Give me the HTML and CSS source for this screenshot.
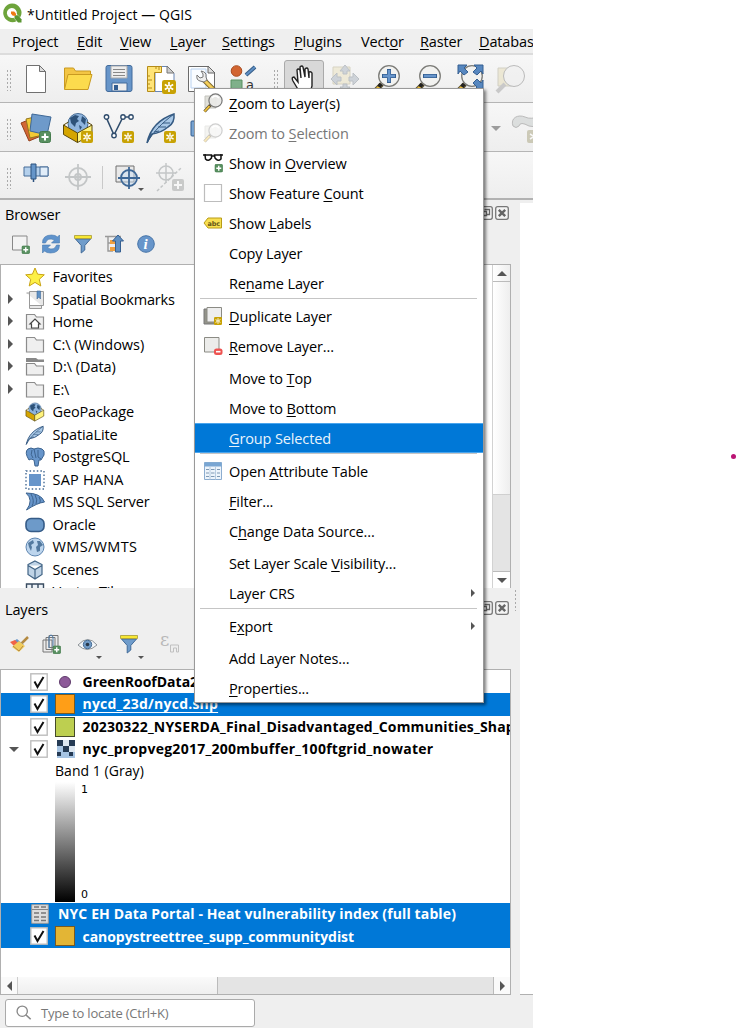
FILE: index.html
```html
<!DOCTYPE html>
<html lang="en">
<head>
<meta charset="utf-8">
<title>*Untitled Project — QGIS</title>
<link rel="stylesheet" href="styles.css">
</head>
<body>
<svg class="defs" width="0" height="0">
  <defs>
    <symbol id="mag" viewBox="0 0 20 20"><path d="M2 3h11v12H2z" fill="#e0e0da" stroke="#c2c2bc"/><path d="M1.500 18.500l6-6.500" stroke="#5c5030" stroke-width="3.200"/><path d="M1.500 18.500l5-5.400" stroke="#f2c33d" stroke-width="1.800"/><circle cx="12.500" cy="7.500" r="6.600" fill="#e9e9e7" fill-opacity=".92" stroke="#777" stroke-width="1.200"/><path d="M9 5q3-4 7 0" stroke="#fff" fill="none" stroke-width="1.500"/></symbol>
    <symbol id="plus" viewBox="0 0 12 12"><rect x=".5" y=".5" width="11" height="11" rx="2" fill="#589060" stroke="#467c4e"/><path d="M6 2.500v7M2.500 6h7" stroke="#fff" stroke-width="2"/></symbol>
    <symbol id="burst" viewBox="0 0 12 12"><rect width="12" height="12" rx="2" fill="#c8a204"/><path d="M6 1.800v8.400M2.400 3.900l7.200 4.200M2.400 8.100l7.200-4.200" stroke="#fff" stroke-width="1.400"/><circle cx="6" cy="6" r=".8" fill="#c8a204"/></symbol>
    <symbol id="folder" viewBox="0 0 20 20"><path d="M1.500 17V2.500h8l2 2.500h7v12z" fill="#efefef" stroke="#8c8c8c" stroke-width="1.200"/></symbol>
    <symbol id="globebox" viewBox="0 0 32 32"><circle cx="16" cy="11.500" r="10" fill="#8fb5de" stroke="#456b94"/><path d="M8 6l5-3 4 1-2 3 2 2-3 2-1 4-4-4zM20 4l4 3-1 6-4-4zM17 13l3 2-2 3z" fill="#2d5279"/><path d="M1.500 13l14 8v9.500L1.500 22.500z" fill="#d5a500" stroke="#5b4a0c"/><path d="M15.500 21l14.500-8v9.500l-14.500 8z" fill="#fff37c" stroke="#5b4a0c"/><path d="M1.500 13l5-3M30 13l-5-3" stroke="#5b4a0c"/></symbol>
    <symbol id="feather" viewBox="0 0 32 32"><path d="M2 31C5 17 14 7 29 2q1 9-6 13-7 6-16 7Q4 26 2 31z" fill="#a9c8e6" stroke="#355a82" stroke-width="1.500"/><path d="M2 31C8 20 17 11 29 2M9 20l5-1M13 15l8 0M18 11l7 0" fill="none" stroke="#355a82"/></symbol>
    <symbol id="funnel" viewBox="0 0 20 20"><path d="M2.500 5l5.700 6.500V19l3.600-3v-4.500L17.500 5z" fill="#6f9ccb" stroke="#416a98"/><path d="M1.500 1.500h17v3h-17z" fill="#f7e733" stroke="#a79b35" stroke-width=".8"/></symbol>
    <symbol id="float" viewBox="0 0 14 14"><rect x=".7" y=".7" width="12.600" height="12.600" rx="2" fill="#f4f4f4" stroke="#777" stroke-width="1.300"/><path d="M5.500 3.500h5v5H8M3.500 5.500h4v4h-4z" fill="none" stroke="#666" stroke-width="1.300"/></symbol>
    <symbol id="close" viewBox="0 0 14 14"><rect x=".7" y=".7" width="12.600" height="12.600" rx="2" fill="#f4f4f4" stroke="#777" stroke-width="1.300"/><path d="M3.800 3.800l6.400 6.400m0-6.400l-6.400 6.400" stroke="#666" stroke-width="2.400"/></symbol>
    <symbol id="zoomer" viewBox="0 0 32 32"><path d="M3 29l8-8" stroke="#5c5030" stroke-width="5"/><path d="M3 29l7-7" stroke="#f2c33d" stroke-width="3"/><path d="M10 21l-2 3" stroke="#222" stroke-width="4"/><circle cx="18" cy="13" r="10.300" fill="#f2f2f0" stroke="#7c7c78" stroke-width="1.300"/></symbol>
    <symbol id="tick" viewBox="0 0 18 18"><rect x=".8" y=".8" width="16.400" height="16.400" fill="#fff" stroke="#bdbdbd" stroke-width="1.400"/><path d="M4.500 8.500l3 5.500L13.500 4" fill="none" stroke="#111" stroke-width="2"/></symbol>
  </defs>
</svg>

<main class="desktop">
  <section class="window">
    <header class="titlebar">
      <svg class="logo" viewBox="0 0 20 20"><path d="M10 .500a9.300 9.300 0 1 0 4.500 17.700L11.500 14.800A5 5 0 1 1 14.800 11l3.300 3.600A9.300 9.300 0 0 0 10 .500z" fill="#6ea43b"/><path d="M12.500 12.200h3.400l3.600 4v3.300h-3.400l-3.600-4z" fill="#5a9632"/><path d="M9 8.500h3.200l1.800 2v2.300h-3.200l-1.800-2z" fill="#ee7913"/></svg>
      <span>*Untitled Project — QGIS</span>
    </header>

    <nav class="menubar">
      <span>Pro<u>j</u>ect</span><span><u>E</u>dit</span><span><u>V</u>iew</span><span><u>L</u>ayer</span><span><u>S</u>ettings</span><span><u>P</u>lugins</span><span>Vect<u>o</u>r</span><span><u>R</u>aster</span><span><u>D</u>atabas</span>
    </nav>

    <div class="toolbar bar-a">
      <i class="grip"></i>
      <svg class="t" viewBox="0 0 32 32"><path d="M6.500 2.500h13l6 6v21h-19z" fill="#fff" stroke="#707070"/><path d="M19.500 2.500v6h6z" fill="#ddd" stroke="#707070"/></svg>
      <svg class="t" viewBox="0 0 32 32"><path d="M2.500 26V5h9l2 3h15v5H9z" fill="#f3c544" stroke="#c99a20"/><path d="M2.500 26.500L6 11.500h24l-4 15z" fill="#fcdb4d" stroke="#c99a20"/></svg>
      <svg class="t" viewBox="0 0 32 32"><rect x="3" y="2.500" width="26" height="26" rx="2" fill="#6795c9" stroke="#426b9b"/><path d="M8 3h16v12H8z" fill="#eee" stroke="#aaa"/><path d="M10 6.500h12M10 9.500h12M10 12.500h12" stroke="#888"/><path d="M9 20h15v8H9z" fill="#eee" stroke="#426b9b"/><path d="M11 22h4v5h-4z" fill="#335d90"/></svg>
      <svg class="t" viewBox="0 0 32 32"><path d="M10 3.500h12l7 7v18H10z" fill="#fff" stroke="#6886b5"/><path d="M22 3v7h7z" fill="#ccc" stroke="#777"/><path d="M2.500 3.500h14v6h-7v19h-7z" fill="#ffe477" stroke="#b48b18"/><path d="M2 13h3M2 17h5M2 21h3M2 25h5M11 3v3M14 3v4" stroke="#b48b18"/><use href="#burst" x="17" y="17" width="14" height="14"/></svg>
      <svg class="t" viewBox="0 0 32 32"><path d="M2.500 3.500h20l6 6v19h-26z" fill="#fff" stroke="#6b6b6b"/><path d="M5 6h15v19H5z" fill="#f9fcff" stroke="#b9d2f1"/><path d="M22 3v7h7z" fill="#ddd" stroke="#666"/><path d="M17 16l12 12" stroke="#7d682d" stroke-width="5"/><path d="M18 17l11 11" stroke="#f4ce5a" stroke-width="3"/><path d="M15 8q6 1 5 6l1 3-3 2-4-1q-4-1-3-6l3 3 3-1 0-3z" fill="#eee" stroke="#777"/></svg>
      <svg class="t" viewBox="0 0 32 32"><circle cx="8.500" cy="8" r="5.300" fill="#d26531" stroke="#a94c20"/><path d="M18 12l9-8" stroke="#355c86" stroke-width="4"/><path d="M18 12l9-8" stroke="#5e8fc3" stroke-width="2"/><path d="M3 17h11v12H3z" fill="#7fb08a" stroke="#589060"/><text x="18" y="26" font-family="DejaVu Sans" font-size="13" fill="#333">a</text></svg>
      <i class="grip second"></i>
      <div class="pressed"><svg viewBox="0 0 32 32"><path d="M11 28L5 18q-2-4 1-4l4 5-1-12q1-2 3 0l1 8-1-11q2-2 3 0l2 10V6q2-2 3 0l1 9V9q2-1 3 1v13l-2 7z" fill="#fff" stroke="#222" stroke-width="1.400"/></svg></div>
      <svg class="t faded" viewBox="0 0 32 32"><path d="M4 4h17v17H4z" fill="#e8dfb8" stroke="#b6ad89"/><path d="M16 2l5 6h-3v3h-4V8h-3zM2 16l6-6v4h4v4H8v4zM30 16l-6-6v4h-4v4h4v4zM16 30l5-6h-3v-3h-4v3h-3z" fill="#a2adb9" stroke="#7b8590"/></svg>
      <svg class="t" viewBox="0 0 32 32"><use href="#zoomer"/><path d="M18 6v14M11 13h14" stroke="#355f91" stroke-width="4"/><path d="M18 7v12M12 13h12" stroke="#6795cb" stroke-width="2.500"/></svg>
      <svg class="t" viewBox="0 0 32 32"><use href="#zoomer"/><path d="M11 13h14" stroke="#355f91" stroke-width="4"/><path d="M12 13h12" stroke="#6795cb" stroke-width="2.500"/></svg>
      <svg class="t" viewBox="0 0 32 32"><use href="#zoomer"/><path d="M4 2h9l-3 3 4 4-4 3-4-4-2 3zM29 2h-9l3 3-4 4 4 3 4-4 2 3zM29 27h-9l3-3-4-4 4-4 4 4 2-3z" fill="#5787bf" stroke="#355f91"/></svg>
      <svg class="t faded" viewBox="0 0 32 32"><path d="M3 5h14v18H3z" fill="#e3d9ae" stroke="#aaa68e"/><path d="M2 29l8-8" stroke="#999" stroke-width="4"/><circle cx="19" cy="13" r="10.500" fill="#eee" stroke="#777"/></svg>
    </div>

    <div class="toolbar bar-b">
      <i class="grip"></i>
      <svg class="t" viewBox="0 0 32 32"><path d="M1 11l12-5 8 18-12 5z" fill="#d26735" stroke="#94411c"/><path d="M6 7l13-3 4 19-13 3z" fill="#f2ca35" stroke="#94761c"/><path d="M12 2l19 3-4 18-17-4z" fill="#6e9aca" stroke="#3e6897"/><use href="#plus" x="19" y="19" width="12" height="12"/></svg>
      <svg class="t" viewBox="0 0 32 32"><use href="#globebox"/><use href="#burst" x="19" y="19" width="12" height="12"/></svg>
      <svg class="t" viewBox="0 0 32 32"><path d="M3 5l8 18 9-18h8" fill="none" stroke="#304d6d" stroke-width="1.600"/><g fill="#fff" stroke="#304d6d" stroke-width="1.400"><circle cx="3.500" cy="5" r="2.200"/><circle cx="11" cy="23.500" r="2.200"/><circle cx="20" cy="5" r="2.200"/><circle cx="28" cy="5" r="2.200"/></g><use href="#burst" x="19" y="19" width="12" height="12"/></svg>
      <svg class="t" viewBox="0 0 32 32"><use href="#feather"/><use href="#burst" x="19" y="19" width="12" height="12"/></svg>
      <svg class="t" viewBox="0 0 32 32"><rect x="5" y="9" width="22" height="15" rx="1" fill="#79a5d2" stroke="#355f91"/></svg>
      <i class="down pale"></i>
      <svg class="t faded" viewBox="0 0 32 32"><path d="M3 14C0 6 8 2 15 5q6 3 15-1v13q-6-3-11-3-9-5-10 0-3 3-6 0z" fill="#c0c5c4" stroke="#777"/><rect x="17" y="18" width="14" height="13" rx="2" fill="#a09a72"/><path d="M24 20v9M20 22l8 5M20 27l8-5" stroke="#fff" stroke-width="1.500"/></svg>
    </div>

    <div class="toolbar bar-c">
      <i class="grip"></i>
      <svg class="t" viewBox="0 0 32 32"><path d="M4 6h24v9H4z" fill="#b4d0ec" stroke="#466c98"/><path d="M20 6h8v9h-8z" fill="#e1edf9" stroke="#466c98"/><path d="M11 3h5v15h-5z" fill="#6595c9" stroke="#2d527f"/><path d="M13.500 18v3" stroke="#2d527f" stroke-width="1.500"/></svg>
      <svg class="t faded" viewBox="0 0 32 32"><g fill="none" stroke="#8c9294" stroke-width="1.800"><circle cx="16" cy="16" r="9"/><circle cx="16" cy="16" r="3"/><path d="M16 3v26M3 16h26"/></g></svg>
      <i class="rule"></i>
      <svg class="t" viewBox="0 0 32 32"><path d="M4 5h18v16H4z" fill="#e9e9e9" stroke="#707070"/><circle cx="17" cy="17" r="8" fill="#c9def2" fill-opacity=".5" stroke="#3e6897" stroke-width="1.800"/><path d="M17 6v22M6 17h22" stroke="#3e6897" stroke-width="1.800"/><path d="M26 27h6l-3 3z" fill="#555"/></svg>
      <svg class="t faded" viewBox="0 0 32 32"><g fill="none" stroke="#8c9294" stroke-width="1.500"><circle cx="12" cy="12" r="7"/><path d="M12 2v20M2 12h20"/><path d="M3 30L27 7" stroke-dasharray="3 2"/></g><rect x="18" y="18" width="12" height="12" rx="2" fill="#999b9a"/><path d="M24 20v8M20 24h8" stroke="#fff" stroke-width="2"/></svg>
    </div>

    <div class="workspace">
      <div class="docks">
        <section class="dock browser">
          <div class="dock-title"><span>Browser</span><svg viewBox="0 0 14 14"><use href="#float"/></svg><svg viewBox="0 0 14 14"><use href="#close"/></svg></div>
          <div class="dock-tools browser-tools">
            <svg viewBox="0 0 20 20"><path d="M2.500 2h14.500v14H2.500z" fill="#f3f3f3" stroke="#888"/><use href="#plus" x="11.500" y="11.500" width="8.500" height="8.500"/></svg>
            <svg viewBox="0 0 20 20"><path d="M1.500 9q0-8 9-8 4 0 6 2l2-2v8h-8l3-3q-7-3-9 3zM18.500 11q0 8-9 8-4 0-6-2l-2 2v-8h8l-3 3q7 3 9-3z" fill="#5f93cc" stroke="#4779af" stroke-width=".6"/></svg>
            <svg viewBox="0 0 20 20"><use href="#funnel"/></svg>
            <svg viewBox="0 0 20 20"><path d="M1 2.500h16M4 2v15h5M4 9h5" stroke="#999" fill="none" stroke-width="1.400"/><path d="M6 6h5v4H6zM6 13h5v4H6z" fill="#f0a03e"/><path d="M14 1l5.500 6H16.500v11h-5V7h-3z" fill="#5f8fc1" stroke="#355f91"/></svg>
            <svg viewBox="0 0 20 20"><circle cx="10" cy="10" r="8.300" fill="#6795ca" stroke="#4674a8"/><text x="7.600" y="15" font-family="Liberation Serif" font-style="italic" font-weight="bold" font-size="15" fill="#fff">i</text></svg>
          </div>
          <div class="tree browser-tree">
            <ul>
              <li><i></i><svg viewBox="0 0 20 20"><path d="M10 1l2.600 6.200 6.700.6-5 4.500 1.500 6.700L10 15.400 4.200 19l1.500-6.700-5-4.500 6.700-.6z" fill="#fdf046" stroke="#c9a416"/></svg><span>Favorites</span></li>
              <li><i class="right"></i><svg viewBox="0 0 20 20"><path d="M4.500 1.500h14v14h-14zM1.500 3h3v15.500h12v-3" fill="#e8e8e8" stroke="#999"/><path d="M12 1h3.500v8L13.700 7 12 9z" fill="#5f91c5" stroke="#3e6897" stroke-width=".6"/></svg><span class="bookmarks">Spatial Bookmarks</span></li>
              <li><i class="right"></i><svg viewBox="0 0 20 20"><use href="#folder"/><path d="M5 12l5-5 5 5h-1.500v4h-7v-4z" fill="#fff" stroke="#444" stroke-width="1.200"/></svg><span>Home</span></li>
              <li><i class="right"></i><svg viewBox="0 0 20 20"><use href="#folder"/></svg><span class="drive">C:\ (Windows)</span></li>
              <li><i class="right"></i><svg viewBox="0 0 20 20"><path d="M1 1h10l2 1.500h6V5H1z" fill="#888"/><path d="M1.500 18V6.500h8l2 2.500h7v9z" fill="#efefef" stroke="#888" stroke-width="1.200"/></svg><span class="drive">D:\ (Data)</span></li>
              <li><i class="right"></i><svg viewBox="0 0 20 20"><use href="#folder"/></svg><span>E:\</span></li>
              <li><i></i><svg viewBox="0 0 20 20"><use href="#globebox"/></svg><span>GeoPackage</span></li>
              <li><i></i><svg viewBox="0 0 20 20"><use href="#feather"/></svg><span>SpatiaLite</span></li>
              <li><i></i><svg viewBox="0 0 20 20"><path d="M3 2Q6 0 9 2q4-2 8 0 3 1 2 6l-3 5-2 0-1 6h-3l-1-6-3-1-2 1Q-1 5 3 2z" fill="#6795ca" stroke="#3c638f"/><path d="M7 3Q5 8 8 11M13 3v7l3 2M9 2l2 9" fill="none" stroke="#3c638f"/></svg><span>PostgreSQL</span></li>
              <li><i></i><svg viewBox="0 0 20 20"><path d="M4 4h12v12H4z" fill="#6795ca"/><path d="M1 1h18v18H1z" fill="none" stroke="#466b95" stroke-width="1.400" stroke-dasharray="1.500 2.100"/></svg><span class="hana">SAP HANA</span></li>
              <li><i></i><svg viewBox="0 0 20 20"><path d="M1 1q15 0 18.500 9Q12 11 1.500 18 9 8 1 1z" fill="#6795ca" stroke="#3c638f"/><path d="M6 2q4 7 1 12M10 3q3 5 1 9M14 5q2 3 1 6" fill="none" stroke="#3c638f"/></svg><span>MS SQL Server</span></li>
              <li><i></i><svg viewBox="0 0 20 20"><rect x="1" y="3.500" width="18" height="13" rx="5" fill="#6d9ac9" stroke="#355b87" stroke-width="1.600"/></svg><span>Oracle</span></li>
              <li><i></i><svg viewBox="0 0 20 20"><circle cx="10" cy="10" r="9" fill="#bdd5ed" stroke="#5c84b0"/><path d="M3 6l5-3 1 3-3 2 1 2-1 4-2-4zM12 4l3 0 3 4-3 2 0 4-3 1-1-5 2-2z" fill="#53799f"/></svg><span class="wms">WMS/WMTS</span></li>
              <li><i></i><svg viewBox="0 0 20 20"><path d="M10 1l7 3.500v10L10 19l-7-4.500v-10zM3 5.500l7 4 7-4M10 9.500V19" fill="#bfd3e6" stroke="#426485" stroke-width="1.200"/></svg><span>Scenes</span></li>
              <li><i></i><svg viewBox="0 0 20 20"><path d="M1.500 2h17v16h-17zM7 2v16M13 2v16M1.500 8h17" fill="#eef3f8" stroke="#394b60" stroke-width="1.400"/></svg><span>Vector Tiles</span></li>
            </ul>
            <div class="vbar"><b><i class="up"></i></b><em></em><b><i class="down"></i></b></div>
          </div>
        </section>

        <section class="dock layers">
          <div class="dock-title"><span>Layers</span><svg viewBox="0 0 14 14"><use href="#float"/></svg><svg viewBox="0 0 14 14"><use href="#close"/></svg></div>
          <div class="dock-tools layer-tools">
            <svg viewBox="0 0 20 20"><path d="M12 10l7-7" stroke="#b48a42" stroke-width="2.500"/><path d="M8 5l7 6-3 2-7-6z" fill="#6795ca"/><path d="M1 8l5-2 6 6-3 4z" fill="#f06448"/><path d="M10 7l6 5-6 6-7-5z" fill="#f2cc5d"/><path d="M4 12l6 5 4-5" stroke="#b48a42" fill="none"/></svg>
            <svg viewBox="0 0 20 20"><path d="M2 6h9v12H2zM5 3.500h9v12H5zM8 1.500h9v12H8z" fill="#ececec" stroke="#777"/><path d="M8 14V3q2-4 4 0v10" fill="none" stroke="#4d7dac"/><use href="#plus" x="11.500" y="11.500" width="8.500" height="8.500"/></svg>
            <svg class="wide" viewBox="0 0 25 28"><path d="M1 11Q11 0 20 11 10 20 1 11z" fill="#f3f6f9" stroke="#8d9296"/><circle cx="10.500" cy="10.500" r="4.200" fill="#719bc6" stroke="#466d96"/><circle cx="10.500" cy="10.500" r="1.800" fill="#28384a"/><path d="M19 22h6l-3 3z" fill="#555"/></svg>
            <svg class="wide" viewBox="0 0 25 28"><use href="#funnel" width="20" height="20"/><path d="M19 22h6l-3 3z" fill="#555"/></svg>
            <svg class="faded" viewBox="0 0 20 20"><text x="0" y="12" font-family="DejaVu Serif" font-size="18" fill="#777">ε</text><path d="M10.500 11h8v7h-2v-4h-3v4h-3z" fill="#eee" stroke="#888"/></svg>
          </div>
          <div class="tree layer-tree">
            <div class="layer"><i></i><svg class="check"><use href="#tick"/></svg><span class="dot"></span><strong>GreenRoofData2</strong></div>
            <div class="layer selected"><i></i><svg class="check"><use href="#tick"/></svg><span class="swatch orange"></span><strong class="linked">nycd_23d/nycd.shp</strong></div>
            <div class="layer"><i></i><svg class="check"><use href="#tick"/></svg><span class="swatch lime"></span><strong class="nyserda">20230322_NYSERDA_Final_Disadvantaged_Communities_Shap</strong></div>
            <div class="layer"><i class="down"></i><svg class="check"><use href="#tick"/></svg><svg class="raster" viewBox="0 0 18 18"><path fill="#a6c4e3" d="M0 0h18v18H0z"/><path fill="#253b55" d="M0 0h6v6H0zM12 0h6v6h-6zM6 6h6v6H6zM0 12h4v4H0zM12 12h4v4h-4z"/><path fill="#dce7f2" d="M6 0h6v6H6zM12 6h6v6h-6z"/></svg><strong class="propveg">nyc_propveg2017_200mbuffer_100ftgrid_nowater</strong></div>
            <div class="band">Band 1 (Gray)</div>
            <div class="legend"><i class="ramp"></i><div><span>1</span><span>0</span></div></div>
            <div class="layer selected table"><svg viewBox="0 0 18 20"><path d="M.700.700h16.600v18.600H.700z" fill="#ddd" stroke="#999"/><path d="M1 5.500h16" stroke="#888"/><path d="M3 3h5M10 3h5M3 9h5M10 9h5M3 13h5M10 13h5M3 16.500h5M10 16.500h5" stroke="#777" stroke-width="1.300"/></svg><strong class="portal">NYC EH Data Portal - Heat vulnerability index (full table)</strong></div>
            <div class="layer selected"><i></i><svg class="check"><use href="#tick"/></svg><span class="swatch gold"></span><strong class="canopy">canopystreettree_supp_communitydist</strong></div>
            <div class="hbar"><b><i class="left"></i></b><em></em><b><i class="right"></i></b></div>
          </div>
        </section>
      </div>
      <div class="canvas-edge"><i class="grip"></i></div>
      <div class="canvas"></div>
    </div>

    <footer class="statusbar"><div class="locator"><svg viewBox="0 0 18 18"><circle cx="7" cy="7" r="5.800" fill="none" stroke="#888" stroke-width="1.500"/><path d="M11 11l5.500 5" stroke="#888" stroke-width="1.800"/></svg><span>Type to locate (Ctrl+K)</span></div></footer>
  </section>

  <div class="map-point"></div>

  <ul class="context-menu">
    <li class="first"><svg viewBox="0 0 20 20"><use href="#mag"/></svg><span><u>Z</u>oom to Layer(s)</span></li>
    <li class="disabled"><svg viewBox="0 0 20 20"><use href="#mag"/></svg><span>Zoom to <u>S</u>election</span></li>
    <li><svg viewBox="0 0 20 20"><path d="M0 2h3M17 2h3M9 3h2" stroke="#111" stroke-width="1.600"/><path d="M2 2h6.500v3q-3 4-6 1zM11.500 2H18v4q-3 3-6-1z" fill="#fff" stroke="#111" stroke-width="1.500"/><use href="#plus" x="11.500" y="11" width="8.500" height="8.500"/></svg><span>Show in <u>O</u>verview</span></li>
    <li><svg viewBox="0 0 20 20"><path d="M1.500 1.500h17v17h-17z" fill="#fff" stroke="#bdbdbd" stroke-width="1.200"/></svg><span>Show Feature <u>C</u>ount</span></li>
    <li><svg viewBox="0 0 20 20"><path d="M1 10l4-5h13.500v10H5z" fill="#f8df51" stroke="#b89c18"/><text x="4.500" y="12.500" font-family="DejaVu Sans" font-weight="bold" font-size="6.500" fill="#665716">abc</text></svg><span>Show <u>L</u>abels</span></li>
    <li><span>Copy Layer</span></li>
    <li><span>Re<u>n</u>ame Layer</span></li>
    <li class="separator"></li>
    <li><svg viewBox="0 0 20 20"><path d="M1 3h13v15H1z" fill="#94948a" stroke="#777"/><path d="M4 1.500h14.500V16H4z" fill="#eee" stroke="#8b8b84"/><use href="#burst" x="11" y="11" width="8" height="8"/></svg><span><u>D</u>uplicate Layer</span></li>
    <li><svg viewBox="0 0 20 20"><path d="M1.500 1.500H16V16H1.500z" fill="#ececea" stroke="#8b8b84"/><rect x="11" y="12.500" width="8.500" height="6.500" rx="2.500" fill="#ee5351"/><path d="M13 15.700h4.500" stroke="#fff" stroke-width="1.600"/></svg><span><u>R</u>emove Layer...</span></li>
    <li class="spaced"><span>Move to <u>T</u>op</span></li>
    <li><span>Move to <u>B</u>ottom</span></li>
    <li class="active"><span><u>G</u>roup Selected</span></li>
    <li class="separator"></li>
    <li><svg viewBox="0 0 20 20"><path d="M1.500 1.500h17v17h-17z" fill="#edf4fb" stroke="#8cadd0"/><path d="M1.500 1.500h17v4h-17z" fill="#79a6d3"/><path d="M7 5v13.500M12.500 5v13.500" stroke="#b7cce1"/><path d="M3 8.500h3M8 8.500h3.500M14 8.500h3M3 12h3M8 12h3.500M14 12h3M3 15.500h3M8 15.500h3.500M14 15.500h3" stroke="#7e99b4"/></svg><span>Open <u>A</u>ttribute Table</span></li>
    <li><span><u>F</u>ilter...</span></li>
    <li><span>C<u>h</u>ange Data Source...</span></li>
    <li class="spaced"><span>Set Layer Scale <u>V</u>isibility...</span></li>
    <li><span>Layer CRS</span><i class="right"></i></li>
    <li class="separator"></li>
    <li><span>E<u>x</u>port</span><i class="right"></i></li>
    <li class="spaced"><span>Add Layer Notes...</span></li>
    <li><span><u>P</u>roperties...</span></li>
  </ul>
</main>
</body>
</html>
```
FILE: styles.css
```css
* { box-sizing: border-box; }
body { margin: 0; background: #fff; color: #000; font: 14.500px/20px "Open Sans", "Noto Sans", sans-serif; font-stretch: 91%; letter-spacing: -.13px; }
ul { list-style: none; margin: 0; padding: 0; }
svg, i, b, em { display: block; flex: none; }
.defs { position: absolute; }
u { text-decoration: underline; text-decoration-thickness: 1px; text-underline-offset: 2px; text-decoration-skip-ink: none; }
.desktop { position: relative; width: 737px; height: 1028px; overflow: hidden; }
.window { width: 533px; height: 1028px; display: flex; flex-direction: column; overflow: hidden; background: #efefef; }
.titlebar { height: 29px; display: flex; align-items: center; gap: 5px; padding-left: 2px; background: #fff; font-size: 14px; letter-spacing: .07px; }
.logo { width: 20px; height: 20px; margin-top: -3px; }
.menubar { height: 26px; display: grid; grid-template-columns: 65px 43px 50px 52px 72px 67px 59px 59px 54px; padding: 3px 0 0 12px; border-bottom: 2px solid #dcdcdc; white-space: nowrap; }

.toolbar { display: flex; align-items: flex-start; background: linear-gradient(#f7f7f7, #eee); border-bottom: 1px solid #b5b5b5; }
.toolbar .t { width: 32px; height: 32px; margin-right: 9.500px; }
.bar-a { height: 48px; padding: 8px 0 0 6px; }
.bar-b { height: 49px; padding: 9px 0 0 6px; }
.bar-c { height: 48px; padding: 9px 0 0 6px; border-bottom: 2px solid #b2b2b2; }
.grip { width: 5px; height: 22px; margin: 6px 9px 0 0; background: radial-gradient(circle, #aaa 32%, transparent 40%) 0 0 / 3px 4px; }
.bar-a .grip.second { margin: 6px 6px 0 4px; }
.pressed { width: 40px; height: 40px; margin: -3px 5px 0 0; padding: 2px 3px; border: 1px solid #aaa; border-radius: 3px; background: #d8d8d8; }
.pressed svg { width: 32px; height: 32px; }
.faded { opacity: .45; }
.rule { width: 1px; height: 23px; margin: 5px 9px 0 -1px; background: #c9c9c9; }

.down { width: 0; height: 0; border: 5px solid transparent; border-top: 5px solid #555; border-bottom: 0; }
.up { width: 0; height: 0; border: 5px solid transparent; border-bottom: 5px solid #555; border-top: 0; }
.right { width: 0; height: 0; border: 5px solid transparent; border-left: 5px solid #555; border-right: 0; }
.left { width: 0; height: 0; border: 5px solid transparent; border-right: 5px solid #555; border-left: 0; }
.bar-b .pale { margin: 14px 9px 0 263px; opacity: .55; }

.workspace { flex: 1; min-height: 0; display: flex; }
.docks { width: 511px; display: flex; flex-direction: column; }
.canvas-edge { width: 9px; padding: 389px 0 0 3px; }
.canvas-edge .grip { width: 4px; margin: 0; }
.canvas { flex: 1; margin-top: 3px; background: #fff; border-bottom: 1px solid #b0b0b0; }
.browser { height: 388px; display: flex; flex-direction: column; overflow: hidden; }
.layers { flex: 1; min-height: 0; display: flex; flex-direction: column; }
.dock-title { display: flex; align-items: center; gap: 2px; height: 28px; padding: 1px 2px 0 5px; }
.dock-title span { flex: 1; }
.dock-title svg { width: 14px; height: 14px; margin-top: -3px; }
.layers .dock-title { height: 32px; padding-top: 11px; }
.dock-tools { display: flex; align-items: flex-start; }
.dock-tools svg { width: 20px; height: 20px; }
.browser-tools { height: 36px; padding: 6px 0 0 9.500px; gap: 11.500px; }
.layer-tools { height: 49px; padding: 14px 0 0 9px; gap: 12px; }
.layer-tools svg:nth-child(2) { margin-right: 4px; }
.layer-tools .wide { width: 25px; height: 28px; margin-right: 4.500px; }
.tree { background: #fff; border: 1px solid #b0b0b0; }
.browser-tree { flex: 1; min-height: 0; display: flex; border-bottom: 0; }
.browser-tree ul { flex: 1; padding-top: 1.200px; }
.browser-tree li { height: 22.470px; display: flex; align-items: center; white-space: nowrap; }
.browser-tree li > i { width: 5px; margin: 0 12px 2px 7px; }
.browser-tree li > svg { width: 20px; height: 20px; margin-right: 7.500px; }
.browser-tree .bookmarks { letter-spacing: -.2px; }
.browser-tree .drive { letter-spacing: -.05px; }
.browser-tree .hana { letter-spacing: .2px; }
.browser-tree .wms { letter-spacing: .35px; }
.vbar { width: 18px; display: flex; flex-direction: column; border-left: 1px solid #d2d2d2; background: linear-gradient(90deg, #fff, #eee); }
.vbar b { height: 17px; display: grid; place-items: center; border-bottom: 1px solid #bbb; }
.vbar em { flex: 1; background: linear-gradient(transparent 212px, #bbb 212px, #e4e4e4 213px); }
.vbar b:last-child { border-top: 1px solid #bbb; border-bottom: 0; background: #fff; }

.layer-tree { height: 326px; overflow: hidden; padding-top: .7px; }
.layer { height: 22.500px; display: flex; align-items: center; overflow: hidden; white-space: nowrap; font-size: 14px; letter-spacing: 0; }
.layer > i { margin-left: 8px; }
.layer > i:not(.down) { width: 10px; }
.check { width: 18px; height: 18px; margin: 0 7px 0 11px; }
.swatch { flex: none; width: 20px; height: 20px; border: 1px solid #7a5a20; margin-right: 7.500px; }
.orange { background: #ff9e17; }
.lime { background: #bdcf50; border-color: #454a29; }
.gold { background: #e3b535; }
.dot { flex: none; width: 12px; height: 12px; margin: 0 11.500px 0 4px; border: 1px solid #5f3b6c; border-radius: 50%; background: #8d5a99; }
.raster { width: 18px; height: 18px; margin: 0 7.500px 0 2px; }
.selected { background: #0078d7; color: #fff; }
.linked { letter-spacing: .22px; text-decoration: underline; text-underline-offset: 3px; text-decoration-thickness: 1px; }
.nyserda { letter-spacing: .17px; }
.propveg { letter-spacing: .26px; }
.portal { letter-spacing: .12px; }
.canopy { letter-spacing: -.04px; }
.band { height: 21.500px; padding-left: 54px; font-size: 14px; line-height: 20px; letter-spacing: .05px; }
.legend { height: 120.500px; display: flex; gap: 6px; padding-left: 54px; }
.ramp { width: 20px; height: 120px; background: linear-gradient(#fff, #000); }
.legend div { display: flex; flex-direction: column; justify-content: space-between; font: 11px/16px "DejaVu Sans", sans-serif; }
.table { padding-left: 30px; gap: 9px; }
.table svg { width: 18px; height: 20px; }
.selected.table strong, .canopy { padding-top: 1px; }
.hbar { display: flex; height: 18px; margin-top: 29.300px; background: #e4e4e4; }
.hbar b { width: 17px; display: grid; place-items: center; background: #fafafa; border-right: 1px solid #ccc; }
.hbar em { width: 200px; background: linear-gradient(#fafafa, #eee); border-right: 1px solid #bbb; }
.hbar b:last-child { margin-left: auto; border-right: 0; border-left: 1px solid #bbb; }
.statusbar { height: 33px; padding: 4px 5px; }
.locator { width: 250px; height: 28px; display: flex; align-items: center; gap: 9px; padding-left: 10px; border: 1px solid #aaa; border-radius: 3px; background: #fff; color: #777; font-size: 13px; letter-spacing: -.22px; }
.locator svg { width: 16px; height: 16px; }

.map-point { position: absolute; left: 731px; top: 454px; width: 5px; height: 5px; border-radius: 50%; background: #bb1474; }
.context-menu { position: absolute; left: 194px; top: 88px; width: 290px; height: 615px; border: 1px solid #999; background: #fff; box-shadow: 2px 2px 3px rgba(0, 0, 0, .5); }
.context-menu li { height: 30px; display: flex; align-items: center; padding: 1px 0 0 34px; white-space: nowrap; }
.context-menu li > svg { width: 20px; height: 20px; margin: -2px 6px 0 -26px; }
.context-menu li > .right { margin: -2px 8px 0 auto; border-width: 4px; border-right-width: 0; }
.context-menu .first { height: 29px; }
.context-menu .spaced { margin-top: 2px; }
.context-menu .separator { height: 3px; margin: 0 6px 0 5px; padding: 0; background: linear-gradient(#c5c5c5 1px, #fff 1px); }
.context-menu .disabled { color: #777; }
.disabled svg { opacity: .35; }
.context-menu .active { background: #0078d7; color: #e9f4fc; border: 1px solid #4aa5ed; border-width: 1px 0; }
```
